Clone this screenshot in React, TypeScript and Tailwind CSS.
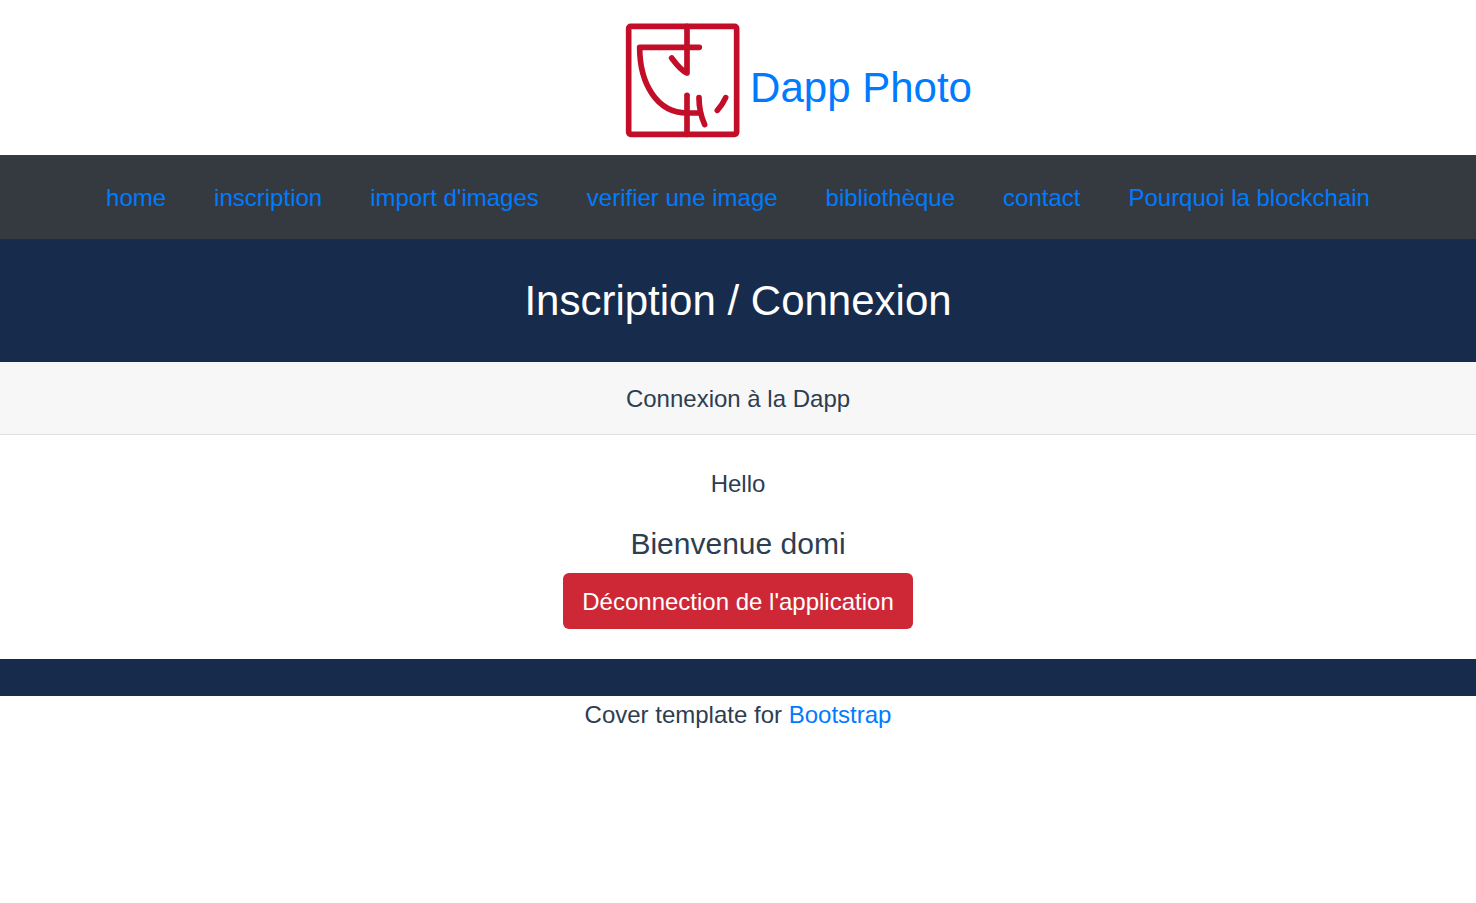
const navItems = [
  "home",
  "inscription",
  "import d'images",
  "verifier une image",
  "bibliothèque",
  "contact",
  "Pourquoi la blockchain",
];

function Logo() {
  return (
    <svg
      className="h-[155px] w-[246px] shrink-0"
      viewBox="0 0 246 155"
      fill="none"
      role="img"
      aria-label="Dapp Photo logo"
    >
      <g
        transform="translate(111 15) scale(0.3333)"
        stroke="#c20e28"
        strokeWidth="17"
        strokeLinecap="round"
        strokeLinejoin="round"
      >
        <rect x="41" y="34" width="324" height="324" rx="6" />
        <path d="M216 34V174Q198 167 170 129" />
        <path d="M253 97H74C74 205 125 294 216 294H256" />
        <path d="M216 241V358" />
        <path d="M252 248C252 278 257 302 269 329" />
        <path d="M332 248Q322 270 307 286" />
      </g>
    </svg>
  );
}

export default function App() {
  return (
    <div className="bg-white text-center font-['Liberation_Sans',Arial,sans-serif] text-2xl leading-9 text-[#2c3e50]">
      <header>
        <a href="#" className="flex items-center justify-center text-[42px] leading-[50px] text-[#007bff]">
          <Logo />
          <span className="pt-5">Dapp Photo</span>
        </a>
      </header>

      <nav className="bg-[#343a40] pt-[25px] pb-[23px]">
        <ul className="flex flex-wrap justify-center gap-x-12">
          {navItems.map((item) => (
            <li key={item}>
              <a href="#" className="text-[#007bff]">
                {item}
              </a>
            </li>
          ))}
        </ul>
      </nav>

      <main>
        <h1 className="bg-[#172b4d] pt-[37px] pb-[35px] text-[42px] leading-[50px] text-white">
          Inscription / Connexion
        </h1>
        <section>
          <h2 className="border-y border-t-[#172b4d] border-b-[#dfdfdf] bg-[#f7f7f7] pt-[19px] pb-[17px]">
            Connexion à la Dapp
          </h2>
          <div className="flex flex-col items-center pt-[31px] pb-[30px]">
            <p className="mb-6">Hello</p>
            <h3 className="mb-[11px] text-3xl leading-9">Bienvenue domi</h3>
            <button type="button" className="rounded-md bg-[#ce2837] px-[19px] pt-[11px] pb-[9px] text-white">
              Déconnection de l'application
            </button>
          </div>
        </section>
        <div className="h-[37px] bg-[#172b4d]" />
      </main>

      <footer className="pt-px">
        Cover template for{" "}
        <a href="#" className="text-[#007bff]">
          Bootstrap
        </a>
      </footer>
    </div>
  );
}
